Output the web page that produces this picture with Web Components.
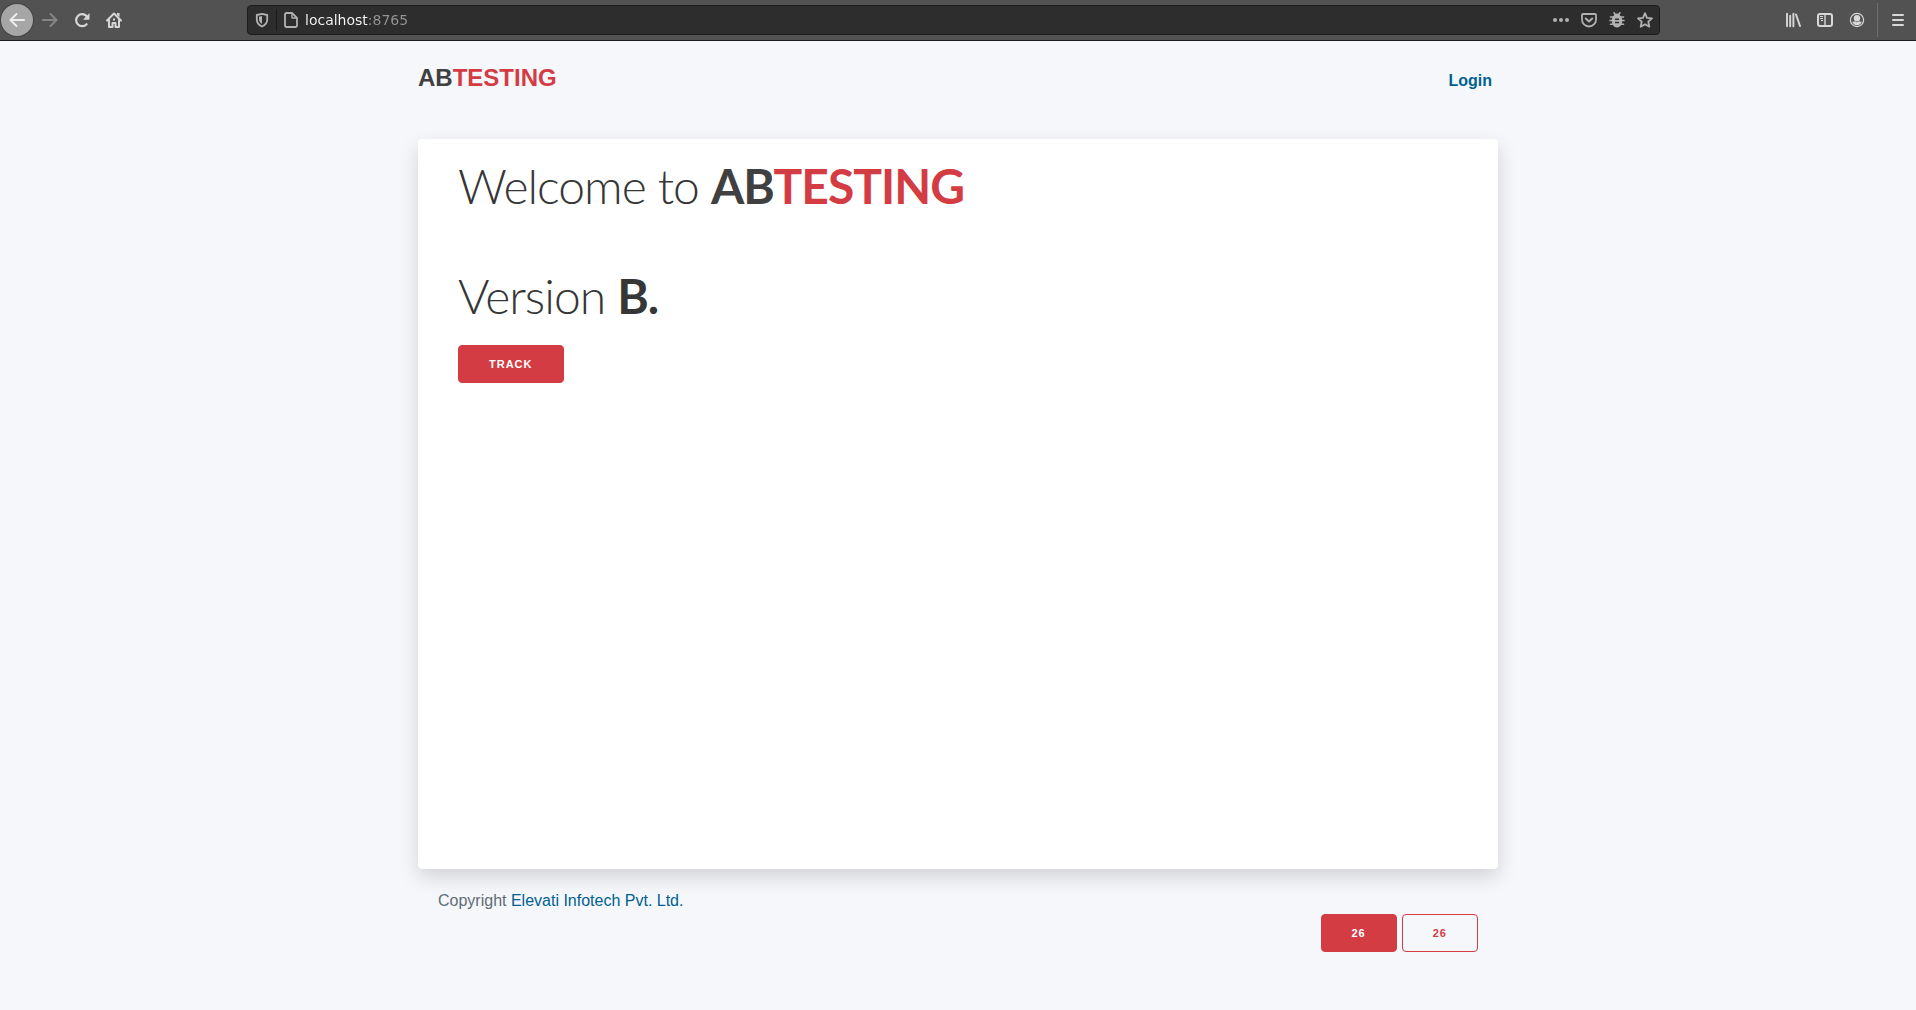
<!DOCTYPE html>
<html lang="en">
<head>
<meta charset="utf-8">
<title>ABTESTING</title>
<style>
  html, body { height: 100%; }
  body { margin: 0; display: flex; flex-direction: column; background: #f5f7fb; color: #606c76; font: 16px/26px "Liberation Sans", Arial, sans-serif; }
  app-page { flex: 1; }
</style>
</head>
<body>
<browser-bar></browser-bar>
<app-page>
  <brand-name slot="logo"></brand-name>
  <a-link slot="nav" href="#login" strong>Login</a-link>
  <welcome-card></welcome-card>
  <span slot="copyright">Copyright <a-link href="#company">Elevati Infotech Pvt. Ltd.</a-link></span>
  <app-button slot="counters">26</app-button>
  <app-button slot="counters" outline>26</app-button>
</app-page>
<script>
const define = (name, html, setup) => customElements.define(name, class extends HTMLElement {
  constructor() {
    super();
    const t = document.createElement('template');
    t.innerHTML = html;
    this.attachShadow({ mode: 'open' }).append(t.content.cloneNode(true));
  }
  connectedCallback() { if (setup) setup(this, this.shadowRoot); }
});

const icons = {
  back: '<g fill="none" stroke="currentColor" stroke-width="2" stroke-linecap="round" stroke-linejoin="round"><path d="M15 8H2M7.5 2 1.5 8l6 6"/></g>',
  forward: '<g fill="none" stroke="currentColor" stroke-width="2" stroke-linecap="round" stroke-linejoin="round"><path d="M1 8h13M8.500 2l6 6-6 6"/></g>',
  reload: '<path fill="none" stroke="currentColor" stroke-width="2.200" stroke-linecap="round" d="M12.600 12.200A6 6 0 1 1 12.500 4"/><path fill="currentColor" d="M15.500 1v6a.8.8 0 0 1-.8.8H9z"/>',
  home: '<g fill="none" stroke="currentColor" stroke-width="2" stroke-linecap="round" stroke-linejoin="round"><path d="M1 8.500 8 1.500l7 7M3 8v7h3.500v-4h3v4H13V8"/></g><path fill="currentColor" d="M11 1h2.500v4L11 3zM7 6.500h2v2H7z"/>',
  shield: '<path fill="none" stroke="currentColor" stroke-width="1.800" stroke-linejoin="round" d="M8 1.800 13.200 3v4.500c0 3.300-2 5.600-5.200 7-3.200-1.400-5.200-3.700-5.200-7V3z"/><path fill="currentColor" d="M8 4v8c-1.900-1-3-2.500-3-4.700V4.700z"/>',
  page: '<g fill="none" stroke="currentColor" stroke-width="1.800" stroke-linejoin="round"><path d="M3.500 1H9l5 5v7.500a1.500 1.500 0 0 1-1.500 1.500h-9A1.500 1.500 0 0 1 2 13.500v-11A1.500 1.500 0 0 1 3.500 1z"/><path stroke-width="1.400" d="M9 1.500V6h4.500"/></g>',
  dots: '<g fill="currentColor"><circle cx="2" cy="8" r="2"/><circle cx="8" cy="8" r="2"/><circle cx="14" cy="8" r="2"/></g>',
  pocket: '<g fill="none" stroke="currentColor" stroke-width="1.800" stroke-linecap="round" stroke-linejoin="round"><path d="M2 2h12a1 1 0 0 1 1 1v4.500a7 7 0 0 1-14 0V3a1 1 0 0 1 1-1z"/><path stroke-width="2" d="m4.800 6.500 3.200 3 3.200-3"/></g>',
  bug: '<path fill="none" stroke="currentColor" stroke-width="1.600" stroke-linecap="round" d="m5 .8 1.500 2M11 .8l-1.500 2M1.500 5H14.500M1 8.500h3M15 8.500h-3M1.500 12.200H4M14.500 12.200H12"/><path fill="currentColor" fill-rule="evenodd" d="M8 1.500c2 0 3.200 1.300 3.400 2.600 1.100.8 1.800 2.300 1.800 4.400 0 4-2 7-5.200 7s-5.200-3-5.200-7c0-2.100.7-3.600 1.800-4.400C4.800 2.800 6 1.500 8 1.500zM6 6.500v1.400h4V6.500zM6 9.800v1.400h4V9.800z"/>',
  star: '<path fill="none" stroke="currentColor" stroke-width="1.800" stroke-linejoin="round" d="m8 1.200 2 4.600 5 .5-3.700 3.400 1 5L8 12.200l-4.300 2.500 1-5L1 6.300l5-.5z"/>',
  library: '<path fill="none" stroke="currentColor" stroke-width="1.900" stroke-linecap="round" d="M2 1.800v12.400M5.200 3.800v10.400M8.400 1.800v12.400M11 2.500l4 11.500"/>',
  sidebar: '<rect x="1" y="2" width="14" height="12" rx="2" fill="none" stroke="currentColor" stroke-width="2"/><path fill="none" stroke="currentColor" stroke-width="1.400" d="M8 2v12"/><path stroke="currentColor" d="M3 4.500h3M3 6.500h3M4 8.500h2"/>',
  account: '<circle cx="8" cy="8" r="6.600" fill="none" stroke="currentColor" stroke-width="1.200"/><circle cx="8" cy="6.200" r="3.200" fill="currentColor"/><path fill="currentColor" d="M3.200 9.500c1.200.4 1.900 0 2.500-.2 1.200 1.100 3.400 1.100 4.600 0 .6.200 1.300.6 2.500.2-.6 2.200-2.300 3.700-4.800 3.700s-4.200-1.500-4.800-3.700z"/>',
  menu: '<path stroke="currentColor" stroke-width="2" stroke-linecap="round" d="M3 3h10M3 8h10M3 13h10"/>'
};

define('bar-icon', `<style>
  :host { display: block; width: 16px; height: 16px; flex: none; }
  svg { display: block; width: 100%; height: 100%; overflow: visible; }
</style><svg viewBox="0 0 16 16" aria-hidden="true"></svg>`,
  (el, root) => { root.querySelector('svg').innerHTML = icons[el.getAttribute('name')]; });

define('browser-bar', `<style>
  :host { display: flex; align-items: center; box-sizing: border-box; height: 41px; padding: 0 2px 0 1px; background: #525252; border-bottom: 1px solid #1b1b1f; color: #d8d8d8; }
  button { display: grid; place-items: center; width: 32px; height: 32px; padding: 0; border: 0; background: none; color: inherit; }
  .back { margin-right: 1px; border-radius: 50%; background: #a6a6a6; color: #eee; box-shadow: 0 0 0 1px #444; }
  .forward { color: #868686; }
  .url { flex: 1; display: flex; align-items: center; box-sizing: border-box; height: 30px; margin: 0 117px; padding: 0 0 0 6px; border: 1px solid #1c1c1c; border-radius: 4px; background: #2d2d2d; color: #b1b1b1; }
  .url hr { width: 1px; height: 22px; margin: 0 6px; border: 0; background: #1a1a1a; }
  .url button { width: 28px; height: 28px; }
  input { flex: 1; min-width: 0; height: 24px; margin: 0 0 0 6px; padding: 0; border: 0; outline: 0; color: #f5f5f5; font: 14px/24px "DejaVu Sans", sans-serif; background: linear-gradient(90deg, #f9f9fa 63px, #959595 63px); -webkit-background-clip: text; background-clip: text; -webkit-text-fill-color: transparent; }
  .rule { width: 1px; height: 34px; margin: 0 4px; background: #6e6e6e; }
  nav { display: flex; align-items: center; }
</style>
<nav aria-label="History">
  <button class="back" aria-label="Back"><bar-icon name="back"></bar-icon></button>
  <button class="forward" aria-label="Forward"><bar-icon name="forward"></bar-icon></button>
  <button aria-label="Reload"><bar-icon name="reload"></bar-icon></button>
  <button aria-label="Home"><bar-icon name="home"></bar-icon></button>
</nav>
<div class="url">
  <bar-icon name="shield"></bar-icon><hr><bar-icon name="page"></bar-icon>
  <input type="text" aria-label="Address" value="localhost:8765" spellcheck="false">
  <button aria-label="Page actions"><bar-icon name="dots"></bar-icon></button>
  <button aria-label="Save"><bar-icon name="pocket"></bar-icon></button>
  <button aria-label="Debug"><bar-icon name="bug"></bar-icon></button>
  <button aria-label="Bookmark"><bar-icon name="star"></bar-icon></button>
</div>
<button aria-label="Library"><bar-icon name="library"></bar-icon></button>
<button aria-label="Sidebar"><bar-icon name="sidebar"></bar-icon></button>
<button aria-label="Account"><bar-icon name="account"></bar-icon></button>
<span class="rule"></span>
<button aria-label="Menu"><bar-icon name="menu"></bar-icon></button>`);

define('brand-name', `<style>
  :host { display: inline; font-weight: 700; color: #404040; }
  span { color: #d43c44; }
</style>AB<span>TESTING</span>`);

define('a-link', `<style>
  :host { display: inline; }
  a { color: #006190; text-decoration: none; }
  :host([strong]) a { font-weight: 700; }
</style><a><slot></slot></a>`,
  (el, root) => { root.querySelector('a').href = el.getAttribute('href'); });

define('app-button', `<style>
  :host { display: inline-block; }
  button { display: block; height: 38px; padding: 0 30px; border: 1px solid #d43c44; border-radius: 4px; background: #d43c44; color: #fff; font: 700 11px/36px "Liberation Sans", Arial, sans-serif; letter-spacing: 1px; text-transform: uppercase; cursor: pointer; }
  :host([outline]) button { background: transparent; color: #d43c44; }
</style><button type="button"><slot></slot></button>`);

define('welcome-card', `<style>
  :host { display: block; box-sizing: border-box; padding: 20px 40px; background: #fff; border-radius: 4px; box-shadow: 0 8px 20px rgba(0, 0, 0, .15); color: #363636; }
  h1 { margin: 0 0 22px; font: 300 48px/54px Lato, sans-serif; letter-spacing: -1px; }
  h1 + h1 { margin-top: 56px; }
  b { font-weight: 700; }
</style>
<h1>Welcome to <brand-name></brand-name></h1>
<h1>Version <b>B.</b></h1>
<app-button>Track</app-button>`);

define('app-page', `<style>
  :host { display: flex; flex-direction: column; box-sizing: border-box; width: 100%; max-width: 1080px; margin: 0 auto; padding-bottom: 58px; }
  header { display: flex; justify-content: space-between; align-items: baseline; padding: 19px 6px 43px 0; }
  .logo { font-size: 24px; line-height: 36px; }
  main { flex: 1; display: flex; flex-direction: column; }
  ::slotted(welcome-card) { flex: 1; }
  footer { display: flex; flex-direction: column; padding: 19px 20px 0; }
  .counters { display: flex; justify-content: flex-end; gap: 5px; }
</style>
<header><div class="logo"><slot name="logo"></slot></div><nav><slot name="nav"></slot></nav></header>
<main><slot></slot></main>
<footer><div><slot name="copyright"></slot></div><div class="counters"><slot name="counters"></slot></div></footer>`);
</script>
</body>
</html>
